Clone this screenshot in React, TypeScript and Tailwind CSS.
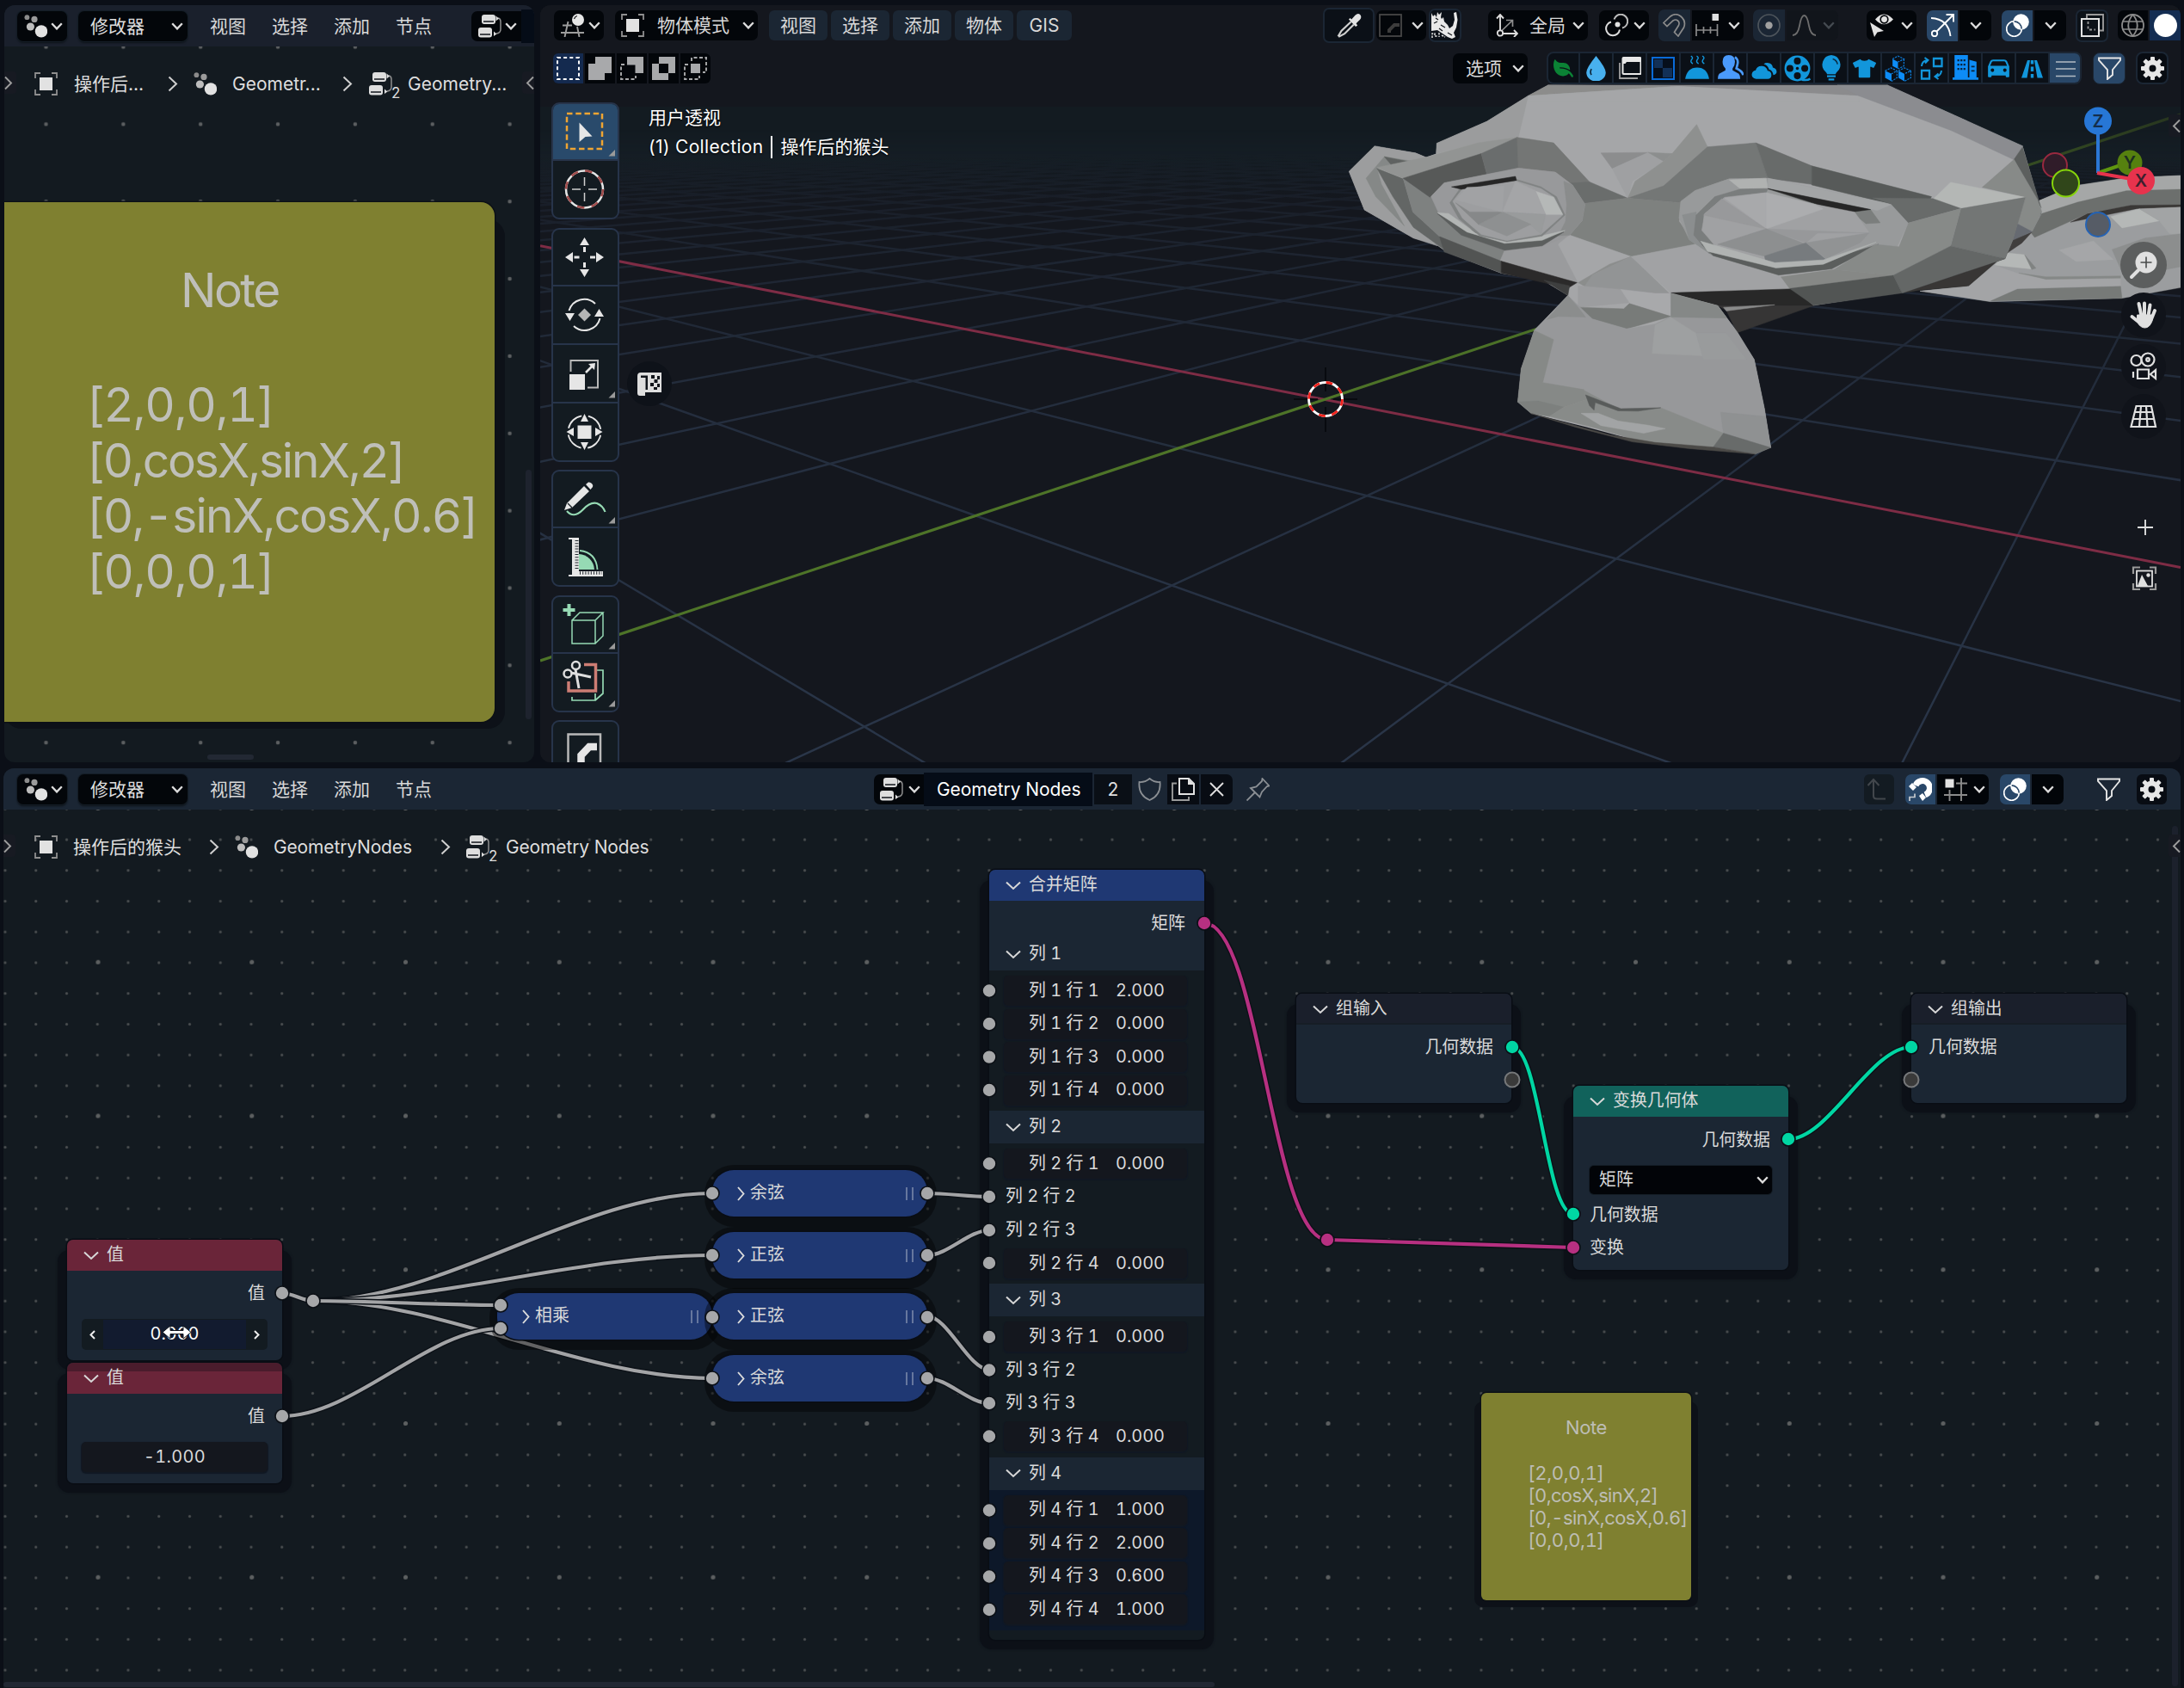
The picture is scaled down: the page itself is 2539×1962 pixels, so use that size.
import React from "react";
import { FaLeaf, FaTshirt } from "react-icons/fa";
import { IoCar } from "react-icons/io5";

type Kids = { children?: React.ReactNode };

/* ---------- icons ---------- */

function Ico({ children, size = 27, className = "" }: Kids & { size?: number; className?: string }) {
  return (
    <svg width={size} height={size} viewBox="0 0 27 27" fill="none" className={`shrink-0 ${className}`}>
      {children}
    </svg>
  );
}

const Chev = ({ c = "#dcdcdc", className = "" }: { c?: string; className?: string }) => (
  <svg width="14" height="9" viewBox="0 0 14 9" fill="none" className={`shrink-0 ${className}`}>
    <path d="M1.2 1.2 L7 7.4 L12.8 1.2" stroke={c} strokeWidth="2.3" />
  </svg>
);

const BigChev = () => (
  <svg width="18" height="11" viewBox="0 0 18 11" fill="none" className="shrink-0">
    <path d="M1 1.5 L9 9 L17 1.5" stroke="#d8d8d8" strokeWidth="2" />
  </svg>
);

const CrumbChev = ({ className = "" }: { className?: string }) => (
  <svg width="12" height="19" viewBox="0 0 12 19" fill="none" className={`shrink-0 ${className}`}>
    <path d="M1.5 1.5 L10 9.5 L1.5 17.5" stroke="#cfcfcf" strokeWidth="2" />
  </svg>
);

const ModIcon = () => (
  <Ico>
    <circle cx="3.4" cy="3.2" r="2.9" fill="#8b8b8b" />
    <circle cx="12" cy="5.4" r="3.6" fill="#9b9b9b" />
    <circle cx="7.4" cy="14" r="4.6" fill="#bdbdbd" />
    <circle cx="20" cy="19.4" r="7.2" fill="#e2e2e2" />
  </Ico>
);

const TreeIcon = () => (
  <Ico>
    <rect x="4" y="0" width="16" height="11" rx="3" fill="#dedede" />
    <path d="M6 8 H18" stroke="#10151b" strokeWidth="1.3" />
    <rect x="0" y="15" width="16" height="11.5" rx="3" fill="#dedede" />
    <path d="M2 23 H14" stroke="#10151b" strokeWidth="1.3" />
    <path d="M23 4 Q26 4.500 26 8 V17 Q26 21.500 21 22" stroke="#8f8f8f" strokeWidth="1.500" />
    <path d="M20.500 1.500 L24 4.500 L20.500 7.500 Z M18 19.500 L21.500 22.500 L18 25 Z" fill="#dedede" />
  </Ico>
);

const ObjIcon = () => (
  <Ico>
    <path d="M1 7 V1 H7 M20 1 H26 V7 M26 20 V26 H20 M7 26 H1 V20" stroke="#8f8f8f" strokeWidth="1.8" />
    <rect x="6" y="6" width="15" height="15" fill="#e2e2e2" />
  </Ico>
);

const ViewIcon = () => (
  <Ico>
    <circle cx="20" cy="7" r="7" fill="#e6e6e6" />
    <path d="M15.500 6 Q16.500 3 19 2.500" stroke="#111" strokeWidth="1.200" />
    <path d="M2 13.500 H13 M0 22 H27 M8.500 9 L4.500 27 M19 15 L21.500 27" stroke="#9d9d9d" strokeWidth="1.900" />
  </Ico>
);

const OverlayIcon = () => (
  <Ico>
    <circle cx="17.500" cy="9.500" r="9.300" fill="#fff" />
    <circle cx="9.500" cy="17.500" r="8.800" stroke="#fff" strokeWidth="1.700" />
    <path d="M9.700 8.800 A8.800 8.800 0 0 1 18.200 17.600" stroke="#294768" strokeWidth="1.700" />
  </Ico>
);

const FunnelIcon = () => (
  <Ico>
    <path d="M1 1.500 H26 V4 L17 15 V21 L11 26 V15 L1 4 Z" stroke="#e6e6e6" strokeWidth="1.900" />
  </Ico>
);

const GearIcon = () => (
  <Ico>
    <circle cx="13.500" cy="13.500" r="7" stroke="#e6e6e6" strokeWidth="6" />
    {[0, 45, 90, 135, 180, 225, 270, 315].map((a) => (
      <rect key={a} x="11" y="0" width="5" height="6" rx="1" fill="#e6e6e6" transform={`rotate(${a} 13.5 13.5)`} />
    ))}
  </Ico>
);

const Eyedropper = () => (
  <Ico size={29}>
    <path d="M16 7 L20 2.500 Q23 -0.500 25.500 2 Q27.500 4.500 25 7.500 L21 11.500 L22.500 13.500 L20.500 15 L13 7 L14.500 5.500 Z" fill="#e3e3e3" />
    <path d="M15.500 9.500 L5 19.500 L1.500 25.500 M18.500 12.500 L8.500 22.500 L2 26" stroke="#d0d0d0" strokeWidth="2" />
  </Ico>
);

const BevelDim = () => (
  <Ico>
    <rect x="1" y="1" width="25" height="25" stroke="#464646" strokeWidth="1.800" />
    <path d="M12 22 V19 L18 13 H24" stroke="#3c3c3c" strokeWidth="4" />
  </Ico>
);

const Rhino = () => (
  <svg width="32" height="31" viewBox="0 0 32 31" className="shrink-0">
    <path
      d="M1 1 L3 5 L5 3 L7 6 L8 0 L10 3 L13 0 L12 6 L13 8 L15 6 L16 11 L20 15 L22 19 L26 16 L28 9 L27 1 L30 0 L31.500 9 L30 18 L27 24 L29 29 L25 31 L20 29 L14 25 L8 21 L1 22 Z"
      fill="#e8e8e8"
    />
    <path d="M4 13 L8 11 M12 15 L17 18 M10 19 L14 22 M20 24 L25 27 M6 7 L9 9" stroke="#15181d" strokeWidth="1.300" />
    <path d="M2 30 V25 H5 V28 H8 M10 24 V29 M13 27 L17 29" stroke="#e0e0e0" strokeWidth="1.500" fill="none" strokeDasharray="2.500 1.200" />
  </svg>
);

const OrientIcon = () => (
  <Ico>
    <path d="M6 20 V2 M2 5.500 L6 1 L10 5.500 M8 23 H25 M22 19 L26 23 L22 27" stroke="#dcdcdc" strokeWidth="1.900" />
    <path d="M7.500 20 L20 8 M13 7.500 H20.500 V15" stroke="#8f8f8f" strokeWidth="1.700" />
    <circle cx="6" cy="22.500" r="3.200" stroke="#dcdcdc" strokeWidth="1.800" />
  </Ico>
);

const PivotIcon = () => (
  <Ico>
    <circle cx="14.500" cy="12.500" r="3" fill="#e2e2e2" />
    <path d="M10.500 6.500 A8 8 0 1 1 20 16.500" stroke="#bcbcbc" strokeWidth="2" />
    <path d="M17 18.500 A8 8 0 1 1 7 9.500" stroke="#dcdcdc" strokeWidth="2" />
  </Ico>
);

const MagnetDim = () => (
  <Ico>
    <path
      d="M1 10.500 L9 3 Q15 -1.500 21 3 Q27.500 8.500 24.500 16 L18 26 L13.500 21.500 L18.500 13.500 Q20 10 17.500 8 Q15 6 12 8 L5 14.500 Z"
      stroke="#8b8b8b"
      strokeWidth="1.700"
    />
  </Ico>
);

const IncIcon = () => (
  <Ico>
    <rect x="19.500" y="0" width="8" height="8" fill="#dedede" />
    <path d="M1 12 V26 M9.500 15 V23 M17.500 15 V23 M25.500 12 V26 M1 19 H26" stroke="#8b8b8b" strokeWidth="1.700" />
  </Ico>
);

const PropIcon = () => (
  <Ico>
    <circle cx="13.500" cy="13.500" r="12.500" stroke="#4d545b" strokeWidth="1.700" />
    <circle cx="13.500" cy="13.500" r="4.200" fill="#a0a0a0" />
  </Ico>
);

const FalloffIcon = () => (
  <Ico>
    <path d="M0 25 Q6 25 8 14 Q10 2 13.500 2 Q17 2 19 14 Q21 25 27 25" stroke="#6d6d6d" strokeWidth="1.800" />
  </Ico>
);

const EyeCursorIcon = () => (
  <Ico>
    <path d="M6 6.500 Q16 -5.500 27 6.500 Q16 18 6 6.500 Z" fill="#e2e2e2" />
    <circle cx="16.500" cy="6.500" r="4.300" stroke="#05080c" strokeWidth="1.700" />
    <path d="M0 10 L16 20 L8.500 21.500 L5 27 Z" fill="#e2e2e2" />
  </Ico>
);

const GizmoIcon = () => (
  <Ico>
    <path d="M0 5 Q20 6 22.500 26" stroke="#fff" strokeWidth="1.900" />
    <path d="M6 21 L25 2 M17.500 1 H26 V9.500" stroke="#fff" strokeWidth="1.900" />
    <circle cx="4" cy="23" r="3.200" stroke="#fff" strokeWidth="1.900" />
  </Ico>
);

const XrayIcon = () => (
  <Ico>
    <rect x="1" y="6" width="20" height="20" stroke="#e2e2e2" strokeWidth="2" />
    <path d="M7 5 V1 H26 V19.500 H22" stroke="#9a9a9a" strokeWidth="1.900" />
    <path d="M8.500 9 V18.500 H17" stroke="#9a9a9a" strokeWidth="1.800" strokeDasharray="3 2.500" />
  </Ico>
);

const WireIcon = () => (
  <Ico>
    <circle cx="13.500" cy="13.500" r="12.500" stroke="#8b8b8b" strokeWidth="1.800" />
    <path d="M13.500 1 Q3 13.500 13.500 26 M13.500 1 Q24 13.500 13.500 26 M2 9 H25 M2 18 H25" stroke="#8b8b8b" strokeWidth="1.700" />
  </Ico>
);

const B = "#1296db";

const stripIcons: React.ReactNode[] = [
  <FaLeaf key="leaf" size={23} color="#0b8235" className="-scale-x-100" />,
  <Ico key="drop" size={29}>
    <path d="M13.500 0 Q24 13 24 18 A10.500 9.500 0 0 1 3 18 Q3 13 13.500 0 Z" fill="#48b0ee" />
    <path d="M8.500 14 Q6.500 17.500 8.500 20.500" stroke="#0c2335" strokeWidth="1.500" />
  </Ico>,
  <Ico key="win">
    <rect x="5.500" y="1" width="21" height="19" rx="1" stroke="#e8e8e8" strokeWidth="2" />
    <path d="M5 1 H27 V6 H10 L8.500 8 H5 Z" fill="#e8e8e8" />
    <path d="M2 7 V25 H23" stroke="#a0a0a0" strokeWidth="1.800" />
  </Ico>,
  <Ico key="check">
    <rect x="1" y="1" width="25" height="25" stroke="#0a6bd8" strokeWidth="2" fill="#060f1c" />
    <path d="M3 3 H13 V13 H3 Z M13 13 H24 V24 H13 Z" fill="#123057" />
  </Ico>,
  <Ico key="steam" size={30}>
    <path d="M1 25 Q3 13 13.500 13 Q24 13 26 25 Z" fill={B} />
    <path d="M7 1 Q10 2.500 7.500 5 Q6 7.500 9 9 M13 1 Q16 2.500 13.500 5 Q12 7.500 15 9 M19 1 Q22 2.500 19.500 5 Q18 7.500 21 9" stroke={B} strokeWidth="1.300" />
  </Ico>,
  <Ico key="users" size={30}>
    <path d="M5 7 Q5 0 11.500 0 Q18 0 18 7 Q18 11 15.500 14 V16 L22 19.500 Q23.500 21 23.500 25 H0 Q0 21 1.500 19.500 L8 16 V14 Q5 11 5 7 Z" fill="#4a9afb" />
    <path d="M18 2 Q22 5 20.500 10 L19.500 14 Q26 17 26.500 21" stroke="#4a9afb" strokeWidth="2.400" />
  </Ico>,
  <Ico key="cloud" size={30}>
    <path d="M5 25 Q0 24 0.500 20 Q1 16.500 4.500 16 Q6 11 11.500 11.500 Q16 12 17 16.500 Q21 17 21 21 Q21 25 17 25 Z" fill={B} />
    <path d="M13 9.500 Q15 7.500 19 8.500 Q22 9.500 22.500 13 Q26.500 14 26.500 17.500 Q26.500 20 23 21 Q22.500 16 18.500 15 Q17 10.500 13 9.500 Z" fill={B} />
  </Ico>,
  <Ico key="reel" size={31}>
    <circle cx="13.500" cy="13.500" r="13" fill={B} />
    <g fill="#0b1017">
      <circle cx="13.500" cy="6" r="3.500" />
      <circle cx="13.500" cy="21" r="3.500" />
      <circle cx="6" cy="13.500" r="3.500" />
      <circle cx="21" cy="13.500" r="3.500" />
      <circle cx="13.500" cy="13.500" r="1.500" />
    </g>
    <path d="M18 25 Q24 26 26.500 24" stroke={B} strokeWidth="2.200" />
  </Ico>,
  <Ico key="bulb" size={30}>
    <path d="M13.500 0 A10 10 0 0 1 19.500 17.500 Q18 19 18 20 H9 Q9 19 7.500 17.500 A10 10 0 0 1 13.500 0 Z" fill={B} />
    <path d="M9 22.200 H18 M10.500 25.500 H16.500" stroke={B} strokeWidth="2" />
    <path d="M15 4 Q19 5 20 9.500" stroke="#0b2b42" strokeWidth="1.400" />
  </Ico>,
  <FaTshirt key="shirt" size={27} color={B} />,
  <Ico key="cubes" size={31}>
    <g fill="#0d8cf7">
      <path d="M8 4 L13.500 7 V14 L8 11 Z M0.500 16 L7 19 V26.500 L0.500 23 Z M14 16 L20 19 V26.500 L14 23 Z" />
    </g>
    <g stroke="#0d7fe0" strokeWidth="1" fill="none" strokeDasharray="2 1">
      <path d="M8 4 L13.500 1 L19.500 4 L13.500 7 M19.500 4 V11 L13.500 14 M0.500 16 L6.500 13 L12.500 16 L7 19 M12.500 16 V23 L7 26.500 M14 16 L20 13 L26.500 16 L20 19 M26.500 16 V23 L20 26.500" />
    </g>
  </Ico>,
  <Ico key="swap">
    <path d="M16 2 H25.500 V11 H16 Z M2 16 H11 V25.500 H2 Z" stroke={B} strokeWidth="2.300" />
    <path d="M2 11 Q2.500 5 8 4 M5.500 1 L9.500 3.800 L6 7.500 M25 16 Q24.500 22 19 23 M21.500 19.500 L17.500 23 L21.500 26" stroke={B} strokeWidth="2" />
  </Ico>,
  <Ico key="bld" size={30}>
    <path d="M2 0 H16 V24 H2 Z M17.500 5 L25 7 V24 H17.500 Z M0 23.500 H27 V25.800 H0 Z" fill="#0d8cf7" />
    <path d="M5 5.500 H13.500 M5 10 H13.500 M5 14.500 H13.500" stroke="#08243f" strokeWidth="2.200" strokeDasharray="2 1.200" />
    <path d="M19.500 12 H23 M19.500 16.500 H23" stroke="#08243f" strokeWidth="1.500" />
  </Ico>,
  <IoCar key="car" size={33} color={B} />,
  <Ico key="road">
    <path d="M8 4 H11 L7.500 24.500 H1 Z M16 4 H19 L26 24.500 H19.500 Z" fill={B} />
    <path d="M13.500 4 V8.500 M13.500 11.500 V17 M13.500 20 V24.500" stroke={B} strokeWidth="3.400" />
  </Ico>,
  <Ico key="list">
    <path d="M2 6 H25 M2 14 H25 M2 22.500 H25" stroke="#b4bcc4" strokeWidth="1.700" />
  </Ico>,
];

/* ---------- bars ---------- */

const Menu = ({ children, className = "" }: Kids & { className?: string }) => (
  <span className={`w-[72px] shrink-0 text-center text-[#d8d8d8] ${className}`}>{children}</span>
);

const dark = "flex h-[35px] shrink-0 items-center rounded-[7px] bg-[#03060a] shadow-[0_0_0_1px_#141d26,0_2px_2px_#0d1218]";

function EditorMenus() {
  return (
    <>
      <div className={`${dark} w-[58px] justify-between pr-[5px] pl-[8px]`}>
        <ModIcon />
        <Chev />
      </div>
      <div className={`${dark} ml-[13px] w-[127px] justify-between pr-[5px] pl-[14px] text-[#dedede]`}>
        修改器
        <Chev />
      </div>
      <div className="ml-[11px] flex">
        <Menu>视图</Menu>
        <Menu>选择</Menu>
        <Menu>添加</Menu>
        <Menu>节点</Menu>
      </div>
    </>
  );
}

const EdgeTab = ({ dir, className }: { dir: "l" | "r"; className: string }) => (
  <div className={`absolute flex h-[26px] w-[14px] items-center bg-[#171a22] ${dir === "l" ? "justify-end rounded-l" : "rounded-r"} ${className}`}>
    <svg width="10" height="17" viewBox="0 0 10 17" fill="none">
      <path d={dir === "l" ? "M9 1.500 L2 8.500 L9 15.500" : "M1 1.500 L8 8.500 L1 15.500"} stroke="#9d9d9d" strokeWidth="1.900" />
    </svg>
  </div>
);

const TreeWithCount = () => (
  <span className="relative flex w-[35px] shrink-0">
    <TreeIcon />
    <span className="absolute top-[13px] left-[26px] text-[17px] leading-[22px]">2</span>
  </span>
);

/* ---------- upper-left node editor ---------- */

function MiniNodeEditor() {
  return (
    <section className="relative ml-[5px] flex w-[616px] shrink-0 flex-col overflow-hidden rounded-[12px] bg-[#131a20]">
      <svg className="absolute inset-0" width="616" height="880" viewBox="5 6 616 880">
        <defs>
          <pattern id="dotsA" width="89.85" height="89.85" patternUnits="userSpaceOnUse" x="8.6" y="9.6">
            <circle cx="44.9" cy="44.9" r="2.300" fill="#5b5e60" />
          </pattern>
        </defs>
        <rect x="5" y="6" width="616" height="880" fill="url(#dotsA)" />
      </svg>
      <header className="relative flex h-[48px] shrink-0 items-center bg-[#1a202c] pl-[15px]">
        <EditorMenus />
        <div className="ml-[31px] flex h-[35px] w-[58px] shrink-0 items-center justify-between rounded-l-[7px] bg-[#03060a] pr-[5px] pl-[8px]">
          <TreeIcon />
          <Chev />
        </div>
        <div className="h-[39px] w-[20px] bg-[#050c17]" />
      </header>
      <nav className="relative mt-[24px] flex h-[38px] items-center pl-[35px] text-[#dedede]">
        <ObjIcon />
        <span className="ml-[19px] w-[90px]">操作后...</span>
        <CrumbChev className="mr-[18px] ml-[19px]" />
        <ModIcon />
        <span className="ml-[18px] w-[102px] whitespace-nowrap">Geometr...</span>
        <CrumbChev className="mr-[19px] ml-[26px]" />
        <TreeWithCount />
        <span className="ml-[10px] whitespace-nowrap">Geometry...</span>
      </nav>
      <EdgeTab dir="r" className="top-[77px] left-0" />
      <EdgeTab dir="l" className="top-[77px] right-0" />
      <div className="relative mt-[119px] h-[604px] w-[570px] shrink-0">
        <div className="absolute top-[20px] right-[-12px] bottom-[-8px] left-0 rounded-[20px] bg-[#0d1118]" />
        <div className="relative h-full rounded-r-[16px] bg-[#7f8030] pt-[65px] text-[55px] leading-[64.8px] text-[#bfbfb9] shadow-[0_0_0_1.5px_#0c1016]">
          <div className="pt-[5px] pl-[205px] tracking-[-0.046em]">Note</div>
          <div className="mt-[68px] pl-[95px] whitespace-pre tabular-nums">
            <div className="tracking-[-0.022em]">[2,0,0,1]</div>
            <div className="tracking-[-0.038em]">[0,cosX,sinX,2]</div>
            <div className="tracking-[-0.033em]">[0,-sinX,cosX,0.6]</div>
            <div className="tracking-[-0.022em]">[0,0,0,1]</div>
          </div>
        </div>
      </div>
      <div className="absolute top-[540px] right-[3px] h-[290px] w-[7px] rounded-full bg-[#1e232e]" />
      <div className="absolute bottom-[3px] left-[236px] h-[6px] w-[54px] rounded-full bg-[#222833]" />
    </section>
  );
}

/* ---------- 3D viewport ---------- */

const O = [1541, 464];
const VA = [-203, 123.6];
const VB = [2607, 108.5];

function rays(from: number[], to: number[], step: number) {
  const out: string[] = [];
  for (let i = -70; i <= 70; i++) {
    if (i === 0) continue;
    const t = i * step;
    const dx = O[0] - from[0] + t * (to[0] - from[0]);
    const dy = O[1] - from[1] + t * (to[1] - from[1]);
    if (dy <= 0) continue;
    const k = 900 / dy;
    out.push(`M${from[0]} ${from[1]}L${(from[0] + dx * k).toFixed(1)} ${(from[1] + dy * k).toFixed(1)}`);
  }
  return out.join("");
}

type Poly = [string, string];

const faceL: Poly[] = [
  ["452,277 1048,277 1285,475 1318,685 1305,770 1270,790 1255,835 1075,950 918,995 750,995 784,1080 814,1170 832,1330 843,1457 816,1478 742,1460 620,1440 520,1390 423,1346 399,1308 405,1200 428,1075 487,962 445,915 370,890 275,822 255,795 216,775 130,683 103,558 148,475 220,498 238,512 256,500 257,466 345,395 417,312", "#a5a6a8"],
  ["452,277 678,281 417,312", "#8c8c8b"],
  ["452,277 1048,277 998,312 690,281", "#8b8b8d"],
  ["417,312 678,281 998,312 998,330 417,330", "#a5a6a8"],
  ["1048,277 1285,475 1270,520 1160,425 998,312 960,277", "#8b8c90"],
  ["417,312 345,395 257,466 256,500 330,465 400,447 410,370", "#9b9c9d"],
  ["148,475 220,498 238,512 152,548 180,640 216,740 258,800 216,775 130,683 103,558", "#9c9d9e"],
  ["165,510 215,525 152,548 160,600 200,735 150,640 133,580", "#858887"],
  ["165,510 205,525 178,538", "#5f6261"],
  ["152,548 198,582 215,690 265,775 268,810 216,740 180,640", "#636665"],
  ["152,545 238,512 330,465 398,447 335,500 198,580", "#929493"],
  ["198,580 250,640 262,700 310,770 376,815 470,795 505,920 370,850 265,775 215,690", "#7e8180"],
  ["376,815 490,765 470,795 505,920 368,850", "#9a9b9d"],
  ["262,770 370,850 370,888 270,820", "#525453"],
  ["370,850 503,920 487,938 370,888", "#2b2a2a"],
  ["445,912 490,930 487,962", "#3e3f3f"],
  ["198,580 335,500 345,568 270,595 245,642", "#575958"],
  ["335,500 398,447 405,547 345,568", "#6a6d6d"],
  ["398,447 462,465 525,592 495,602 465,560 400,547", "#747675"],
  ["525,592 592,645 515,662 490,596", "#6a6d6c"],
  ["545,498 628,496 565,549", "#8c8d8e"],
  ["628,496 655,525 600,590 592,645 565,549", "#9fa0a2"],
  ["628,496 670,500 655,525", "#8c8e8e"],
  ["713,405 732,478 655,605 592,645 605,590 655,525 670,500", "#8e908f"],
  ["732,478 817,465 838,580 770,582 710,620 685,660 592,645 655,605", "#747776"],
  ["817,465 915,540 915,600 838,580", "#686b6a"],
  ["915,540 1125,640 1118,665 1055,665 915,602", "#575a59"],
  ["515,662 592,645 685,660 682,720 710,795 598,835 490,765 512,718", "#7e817f"],
  ["490,765 598,835 530,900 505,920 470,795", "#a5a6a8"],
  ["598,835 530,895 520,935 505,920 560,860", "#8b8d8c"],
  ["598,835 665,955 605,975 590,985 515,935 530,895", "#929495"],
  ["598,835 710,795 740,830 857,895 885,940 668,953", "#a1a2a4"],
  ["668,953 883,940 918,995 750,995", "#282828"],
  ["750,995 918,995 784,1083 765,1010", "#363535"],
  ["760,1000 850,992 765,1012", "#8a8b8b"],
  ["247,640 270,595 400,547 465,560 495,602 517,665 512,718 490,765 445,800 376,815 310,770 262,700", "#98999b"],
  ["480,590 495,602 517,665 512,718 490,765 470,768 483,720 485,665", "#8a8c8c"],
  ["258,695 300,765 376,815 442,800 480,755 440,778 376,792 300,735", "#5c5f5e"],
  ["258,692 310,755 376,792 442,782 482,750 440,768 378,785 325,758 278,695", "#b2b5b4"],
  ["280,660 302,603 395,583 440,608 467,640 482,700 442,768 380,787 332,767 296,712", "#808383"],
  ["285,655 305,608 395,588 440,614 463,642 478,700 440,763 380,783 335,763 302,710", "#9d9ea0"],
  ["283,608 395,574 397,587 300,616", "#262626"],
  ["430,622 462,642 478,698 448,698", "#b5b8b7"],
  ["372,690 448,698 430,620 395,590", "#a4a5a7"],
  ["372,690 448,698 440,762 420,730", "#999b9c"],
  ["372,690 422,730 380,768 330,730", "#8e9091"],
  ["372,690 330,730 290,660 315,690", "#868889"],
  ["372,690 375,605 310,610 290,650", "#a1a2a4"],
  ["682,710 685,655 710,620 770,582 838,580 1055,665 1085,722 1065,802 1020,800 940,878 857,895 740,830 700,780", "#989a9b"],
  ["770,585 835,580 838,612 790,615", "#b0b2b1"],
  ["838,580 1055,665 1030,685 838,612", "#a3a5a6"],
  ["838,615 1018,682 1035,725 1010,728 985,690 920,665", "#7b7e7d"],
  ["688,700 712,690 715,770 740,830 700,780", "#8b8e8f"],
  ["712,700 745,640 790,615 838,614 835,627 765,643 725,700 724,750 750,815 735,825 708,765", "#7a7d7d"],
  ["838,614 1018,682 985,690 925,665", "#262626"],
  ["722,750 727,695 762,642 835,627 920,665 990,690 1015,755 1000,790 940,845 835,862 755,820", "#a0a1a3"],
  ["835,745 762,645 835,627", "#a8a9ab"],
  ["835,745 835,627 920,665 935,680", "#acadaf"],
  ["835,745 725,700 757,647", "#98999b"],
  ["835,745 1013,758 925,758 905,790", "#97989a"],
  ["835,745 905,795 830,833 750,795", "#8d8f90"],
  ["905,790 940,845 835,862 832,833", "#777b7e"],
  ["905,790 1015,758 1000,790 940,842", "#919394"],
  ["722,795 850,864 940,848 1032,795 950,875 857,895 742,832", "#5b5e5d"],
  ["720,785 850,855 935,846 1028,788 935,860 852,872 732,818", "#b0b3b2"],
  ["505,930 580,942 595,985 505,1000", "#9c9d9f"],
  ["580,942 640,955 665,955 668,1030 595,985", "#a8a9ab"],
  ["505,1000 585,1005 595,988 668,1030 590,1070 530,1038", "#787b79"],
  ["487,962 530,1038 590,1070 640,1055 668,1030 668,955 750,995 784,1080 814,1170 832,1330 843,1457 760,1410 650,1327 580,1335 515,1270 443,1245 462,1105 428,1075", "#97989a"],
  ["487,962 505,1000 518,1032 470,1030 450,1040", "#8b8d8d"],
  ["668,955 750,995 766,1035 668,1032", "#858887"],
  ["428,1075 462,1105 443,1245 515,1268 520,1300 480,1325 399,1308 405,1200", "#868987"],
  ["640,1058 668,1033 712,1085 725,1158 635,1150", "#9ea0a1"],
  ["712,1085 765,1085 800,1170 725,1170", "#999b9c"],
  ["399,1308 423,1346 455,1355 480,1325 435,1305", "#7d807e"],
  ["515,1270 580,1335 650,1327 760,1410 742,1457 620,1440 540,1395 455,1355 480,1325 520,1300", "#888b89"],
  ["518,1285 580,1330 650,1327 610,1338 575,1337 535,1310 533,1335 525,1320", "#585b5a"],
  ["510,1345 545,1385 620,1410 658,1395 628,1384 575,1370 540,1345", "#a2a4a5"],
  ["755,1342 833,1355 843,1457 760,1410", "#8f9192"],
  ["760,1410 843,1457 816,1478 742,1455", "#686b6a"],
  ["423,1346 560,1415 640,1440 742,1455 816,1478 700,1460 600,1438 500,1390", "#4b4a47"],
];

const faceR: Poly[] = [
  ["1060,700 1200,645 1368,620 1554,612 1554,1003 1350,1040 890,1052 645,1015 815,997 950,880 965,850 1035,810 1070,740", "#9b9d9f"],
  ["1060,700 1175,650 1368,620 1554,612 1554,662 1365,665 1195,705 1070,745", "#a5a7a7"],
  ["1070,745 1195,705 1365,665 1554,660 1554,716 1380,718 1235,742 1045,828 1033,812", "#6c6f6d"],
  ["1230,745 1380,716 1554,714 1554,722 1400,728 1170,775", "#3a3836"],
  ["1310,755 1410,728 1480,770 1350,795", "#b5b8b7"],
  ["1410,728 1554,722 1554,818 1515,815 1480,770", "#a2a4a5"],
  ["1315,870 1430,830 1554,815 1554,930 1400,960 1350,950", "#8c8e8e"],
  ["1130,872 1250,840 1320,905 1190,912", "#a5a6a8"],
  ["950,882 1010,888 1035,938 905,925", "#b5b8b7"],
  ["1010,888 1050,935 1035,940", "#808382"],
  ["815,997 905,925 990,955 1085,972 1345,965 1345,1000 985,1008 890,1050 645,1015", "#a3a4a6"],
  ["990,952 1085,965 1345,962 1345,970 1085,974", "#858887"],
  ["985,1008 1345,998 1350,1040 890,1050", "#777a78"],
  ["950,880 942,902 583,1022 645,1012 815,997", "#383635"],
  ["970,835 1037,808 1000,848 950,882", "#403e3d"],
  ["973,556 1003,512 1068,725 1050,695", "#5c5f5e"],
  ["973,556 862,653 1013,688 985,780 1037,808 1070,738 1055,695", "#878a88"],
  ["985,780 1037,808 968,838", "#666a71"],
  ["752,635 1013,688 788,727 690,695", "#b4b7b5"],
  ["690,692 788,727 605,777 545,712 480,690", "#686b6a"],
  ["788,727 1013,688 970,835 942,902 752,858", "#737675"],
  ["605,777 788,727 752,858 552,960 345,940 490,852 572,860", "#878a88"],
  ["752,858 942,902 583,1022 552,960", "#646766"],
  ["160,965 345,940 552,960 190,1006", "#868886"],
  ["552,960 583,1022 275,1065 190,1006", "#525554"],
];

function Ball({ x, y, r, fill, stroke, label }: { x: number; y: number; r: number; fill: string; stroke?: string; label?: string }) {
  return (
    <g>
      <circle cx={x} cy={y} r={stroke ? r - 1 : r} fill={fill} stroke={stroke} strokeWidth={stroke ? 2 : 0} />
      {label && (
        <text x={x} y={y + 7} textAnchor="middle" fontSize="20" fontWeight="600" fill="#0f1a26" fillOpacity="0.8">
          {label}
        </text>
      )}
    </g>
  );
}

function Scene() {
  return (
    <svg className="absolute inset-0" width="1907" height="880" viewBox="628 6 1907 880">
      <defs>
        <linearGradient id="sky" x1="0" y1="124" x2="0" y2="235" gradientUnits="userSpaceOnUse">
          <stop offset="0" stopColor="#131b21" />
          <stop offset="0.5" stopColor="#131b21" />
          <stop offset="1" stopColor="#14171e" />
        </linearGradient>
        <linearGradient id="fade" x1="0" y1="150" x2="0" y2="886" gradientUnits="userSpaceOnUse">
          <stop offset="0" stopColor="#fff" stopOpacity="0" />
          <stop offset="0.07" stopColor="#fff" stopOpacity="0.150" />
          <stop offset="0.2" stopColor="#fff" stopOpacity="0.450" />
          <stop offset="0.45" stopColor="#fff" stopOpacity="0.750" />
          <stop offset="1" stopColor="#fff" />
        </linearGradient>
        <linearGradient id="gaxis" x1="1541" y1="0" x2="2535" y2="0" gradientUnits="userSpaceOnUse">
          <stop offset="0" stopColor="#4e7428" />
          <stop offset="0.6" stopColor="#456825" />
          <stop offset="1" stopColor="#27351f" />
        </linearGradient>
        <mask id="far" maskUnits="userSpaceOnUse" x="628" y="6" width="1907" height="880">
          <rect x="628" y="6" width="1907" height="880" fill="url(#fade)" />
        </mask>
      </defs>
      <rect x="628" y="6" width="1907" height="880" fill="#14171e" />
      <rect x="628" y="124" width="1907" height="111" fill="url(#sky)" />
      <g mask="url(#far)" fill="none" stroke="#2a3649" strokeWidth="2.500">
        <path d={rays(VB, VA, 0.1053)} />
        <path d={rays(VA, VB, 0.138)} />
      </g>
      <path d="M628 285.700 L2535 659.500" stroke="#7e2c45" strokeWidth="3" />
      <path d="M628 768 L1541 464 L2535 133" stroke="url(#gaxis)" strokeWidth="3.200" fill="none" />
      <g transform="translate(1500 0) scale(0.66263 0.35714)">
        {faceL.slice(0, 1).map(([p, c]) => (
          <polygon key={p} points={p} fill={c} />
        ))}
      </g>
      <g transform="translate(2017 0) scale(0.33333)">
        {faceR.slice(0, 15).map(([p, c]) => (
          <polygon key={p} points={p} fill={c} stroke={c} strokeWidth="1" />
        ))}
      </g>
      <g transform="translate(1500 0) scale(0.66263 0.35714)">
        {faceL.slice(1).map(([p, c]) => (
          <polygon key={p} points={p} fill={c} stroke={c} strokeWidth="1" />
        ))}
      </g>
      <g transform="translate(2017 0) scale(0.33333)">
        {faceR.slice(15).map(([p, c]) => (
          <polygon key={p} points={p} fill={c} stroke={c} strokeWidth="1" />
        ))}
      </g>
      <path d="M628 6 H2535 V98 H628 Z" fill="#14171e" />
      {/* 3D cursor */}
      <path d="M1541 427 V455 M1541 473 V502 M1504 464 H1532 M1550 464 H1578" stroke="#06080c" strokeWidth="1.600" />
      <circle cx="1541" cy="464" r="19.500" stroke="#fff" strokeWidth="2.800" fill="none" />
      <circle cx="1541" cy="464" r="19.500" stroke="#f2231d" strokeWidth="2.800" fill="none" strokeDasharray="7.660 7.660" />
      {/* orientation gizmo */}
      <path d="M2439 201 L2474 189" stroke="#5f960f" strokeWidth="4" />
      <Ball x={2389} y={192} r={15} fill="#301c29" stroke="#99293f" />
      <Ball x={2476} y={189} r={14.5} fill="#56810f" label="Y" />
      <Ball x={2439} y={261} r={15} fill="#565c66" stroke="#2563b4" />
      <path d="M2439 201 V141" stroke="#2b77d4" strokeWidth="4" />
      <path d="M2438 201 L2489 210" stroke="#e7334d" strokeWidth="4" />
      <Ball x={2439} y={140.5} r={16} fill="#2777d6" label="Z" />
      <Ball x={2401.5} y={213} r={16.5} fill="#30461a" stroke="#86d30b" />
      <Ball x={2489} y={210} r={16} fill="#e7334d" label="X" />
      {/* navigation buttons */}
      <circle cx="2492" cy="308" r="27" fill="#5c5e5e" />
      {[366, 426, 484].map((y) => (
        <circle key={y} cx="2492" cy={y} r="26" fill="#10131a" />
      ))}
      <circle cx="2495" cy="305" r="12.500" fill="#e0e0e0" />
      <path d="M2486 314 L2478 322" stroke="#e0e0e0" strokeWidth="4" strokeLinecap="round" />
      <path d="M2488.500 305 H2501.500 M2495 298.500 V311.500" stroke="#4a4c4c" strokeWidth="1.600" />
      <g stroke="#e0e0e0" strokeLinecap="round" fill="#e0e0e0">
        <path d="M2486.500 353 L2489.500 367 M2493 352.500 V366 M2499.500 354.500 L2497.500 367 M2505 361 L2501 371 M2478.500 368 L2486 374" strokeWidth="4" fill="none" />
        <path d="M2485 366 H2503 L2502 373 Q2499 381 2493.500 381 Q2488 381 2484.500 374 Z" strokeWidth="1" strokeLinejoin="round" />
      </g>
      <g stroke="#e0e0e0" strokeWidth="2.200" fill="none">
        <circle cx="2483.500" cy="419" r="6" />
        <circle cx="2497" cy="418" r="7.500" />
        <circle cx="2497" cy="418" r="1.800" />
        <path d="M2485 429.500 H2498 V440 H2485 Z M2480 432 V439 M2506 430 L2500 435 L2506 440 Z" />
      </g>
      <g stroke="#e0e0e0" strokeWidth="2.200" fill="none">
        <path d="M2483.500 472 H2501 L2506 496 H2477.500 Z M2489 472 L2487 496 M2495 472 L2496.500 496 M2482 479 H2502.500 M2480 487 H2504" />
      </g>
      <path d="M2485 613 H2503 M2494 604 V622" stroke="#dedede" strokeWidth="1.900" />
      <g fill="none">
        <path d="M2480 667 V659.500 H2488 M2499 659.500 H2506 V667 M2506 678 V685 H2499 M2488 685 H2480 V678" stroke="#9a9a9a" strokeWidth="2.200" />
        <rect x="2484" y="663.500" width="18" height="18" stroke="#e0e0e0" strokeWidth="1.800" />
        <path d="M2485 681 L2490 668 L2497 681 Z" fill="#e0e0e0" />
        <circle cx="2497.500" cy="668.500" r="2.200" fill="#e0e0e0" />
      </g>
      {/* tool settings tab */}
      <circle cx="755" cy="446" r="26" fill="#0e1219" />
      <path d="M741 437 Q741 433 745 433 H769 V456 H750 V460 H744 Q741 460 741 457 Z" fill="#dedede" />
      <path d="M745 436.500 H753 V453 H750.500 V439 H745 Z" fill="#10141a" />
      <path d="M757 436 h4 v4 h-4 z M764 437 h3 v4 h-3 z M760.500 441 h4 v4 h-4 z M756 445 h4 v4 h-4 z M764 446 h3 v4 h-3 z M760 450 h4 v3 h-4 z" fill="#10141a" />
    </svg>
  );
}

const hdr = "flex h-[35px] shrink-0 items-center rounded-[7px] bg-[#03060a]";

function ViewHeader() {
  return (
    <div className="relative text-[#d8d8d8]">
      <div className="flex h-[48px] items-center pb-[1px] pl-[16px]">
        <div className={`${hdr} w-[58px] justify-between pr-[4px] pl-[8px]`}>
          <ViewIcon />
          <Chev />
        </div>
        <div className={`${hdr} ml-[13px] w-[166px] justify-between pr-[4px] pl-[7px]`}>
          <ObjIcon />
          <span>物体模式</span>
          <Chev />
        </div>
        <div className="ml-[13px] flex gap-[4px]">
          {["视图", "选择", "添加", "物体"].map((m) => (
            <span key={m} className="flex h-[35px] w-[68px] items-center justify-center rounded-[6px] bg-[#1b2633]">
              {m}
            </span>
          ))}
          <span className="flex h-[35px] w-[64px] items-center justify-center rounded-[6px] bg-[#1b2633]">GIS</span>
        </div>
        <div className="ml-[292px] flex h-[41px] w-[60px] items-center justify-center rounded-[7px] border-2 border-[#1b2634] bg-[#0b1017]">
          <Eyedropper />
        </div>
        <div className={`${hdr} ml-[2px] w-[58px] justify-between pr-[3px] pl-[3px]`}>
          <BevelDim />
          <Chev />
        </div>
        <div className="ml-[3px] flex h-[39px] w-[38px] items-center justify-center overflow-hidden rounded-[7px] border-2 border-[#1b2634] bg-[#0b1017] pr-[2px]">
          <Rhino />
        </div>
        <div className={`${hdr} ml-[31px] w-[116px] justify-between pr-[4px] pl-[8px]`}>
          <OrientIcon />
          <span className="ml-[5px]">全局</span>
          <Chev />
        </div>
        <div className={`${hdr} ml-[13px] w-[58px] justify-between pr-[4px] pl-[7px]`}>
          <PivotIcon />
          <Chev />
        </div>
        <div className="ml-[11px] flex h-[37px] w-[37px] items-center justify-center rounded-l-[7px] bg-[#1b2634]">
          <MagnetDim />
        </div>
        <div className="ml-[2px] flex h-[35px] w-[60px] items-center justify-between rounded-r-[7px] bg-[#03060a] pr-[4px] pl-[4px]">
          <IncIcon />
          <Chev />
        </div>
        <div className="ml-[11px] flex h-[37px] w-[37px] items-center justify-center rounded-l-[7px] bg-[#1b2634]">
          <PropIcon />
        </div>
        <div className="ml-[2px] flex h-[35px] w-[60px] items-center justify-between rounded-r-[7px] bg-[#11151b] pr-[4px] pl-[7px]">
          <FalloffIcon />
          <Chev c="#444a50" />
        </div>
        <div className={`${hdr} ml-[33px] w-[58px] justify-between pr-[4px] pl-[4px]`}>
          <EyeCursorIcon />
          <Chev />
        </div>
        <div className="ml-[12px] flex h-[36px] w-[36px] items-center justify-center rounded-l-[7px] bg-[#294768]">
          <GizmoIcon />
        </div>
        <div className="ml-[2px] flex h-[35px] w-[37px] items-center justify-center rounded-r-[7px] bg-[#03060a]">
          <Chev />
        </div>
        <div className="ml-[12px] flex h-[36px] w-[36px] items-center justify-center rounded-l-[7px] bg-[#294768]">
          <OverlayIcon />
        </div>
        <div className="ml-[2px] flex h-[35px] w-[37px] items-center justify-center rounded-r-[7px] bg-[#03060a]">
          <Chev />
        </div>
        <div className="ml-[11px] flex h-[38px] w-[38px] items-center justify-center rounded-[7px] border-2 border-[#1b2634] bg-[#0d1218]">
          <XrayIcon />
        </div>
        <div className="ml-[11px] flex h-[35px] w-[35px] items-center justify-center rounded-l-[7px] bg-[#03060a]">
          <WireIcon />
        </div>
        <div className="ml-[2px] flex h-[35px] w-[36px] items-center justify-center bg-[#142d52]">
          <span className="size-[27px] rounded-full bg-white" />
        </div>
      </div>
      <div className="flex h-[50px] items-center pl-[15px]">
        <div className="flex gap-[2px] overflow-hidden rounded-[6px]">
          <div className="flex size-[35px] items-center justify-center bg-[#142a4f]">
            <Ico>
              <rect x="1" y="1" width="25" height="25" stroke="#fff" strokeWidth="2" strokeDasharray="4 3.140" />
            </Ico>
          </div>
          <div className="flex size-[35px] items-center justify-center bg-[#03060a]">
            <Ico>
              <path d="M8 0 H27 V19 H19 V27 H0 V8 H8 Z" fill="#a8a9ab" />
            </Ico>
          </div>
          <div className="flex size-[35px] items-center justify-center bg-[#03060a]">
            <Ico>
              <path d="M8 0 H27 V19 H17.500 V9.500 H8 Z" fill="#a8a9ab" />
              <path d="M5 9 H1 V26 H18 V22" stroke="#a8a9ab" strokeWidth="1.900" strokeDasharray="4 2.500" />
            </Ico>
          </div>
          <div className="flex size-[35px] items-center justify-center bg-[#03060a]">
            <Ico>
              <path fillRule="evenodd" d="M8 0 H27 V19 H19 V27 H0 V8 H8 Z M8 8 V19 H19 V8 Z" fill="#a8a9ab" />
            </Ico>
          </div>
          <div className="flex size-[35px] items-center justify-center bg-[#03060a]">
            <Ico>
              <rect x="8" y="8" width="11" height="11" fill="#a8a9ab" />
              <path d="M9 5 V1 H26 V18 H22 M5 9 H1 V26 H18 V22" stroke="#a8a9ab" strokeWidth="1.900" strokeDasharray="4 2.500" />
            </Ico>
          </div>
        </div>
        <div className={`${hdr} ml-[863px] w-[87px] justify-between pr-[4px] pl-[15px]`}>
          选项
          <Chev />
        </div>
        <div className="ml-[22px] flex h-[38px] w-[622px] overflow-hidden rounded-[8px] border-2 border-[#1b2634] bg-[#1b2634]">
          {stripIcons.map((ic, i) => (
            <div
              key={i}
              className={`mr-[2px] flex shrink-0 items-center justify-center last:mr-0 ${i === 0 ? "w-[35px]" : "w-[37px]"} ${i === 15 ? "bg-[#294768]" : "bg-[#0b1017]"}`}
            >
              {ic}
            </div>
          ))}
        </div>
        <div className="ml-[13px] flex h-[37px] w-[38px] items-center justify-center rounded-[8px] border border-[#1b2634] bg-[#294768]">
          <FunnelIcon />
        </div>
        <div className="ml-[12px] flex h-[38px] w-[38px] items-center justify-center rounded-[8px] border-2 border-[#1b2634] bg-[#080c12]">
          <GearIcon />
        </div>
      </div>
    </div>
  );
}

/* ---------- tool shelf ---------- */

const T = ({ children }: Kids) => (
  <svg width="75" height="66" viewBox="0 0 75 66" fill="none" className="shrink-0">
    {children}
  </svg>
);
const corner = <path d="M72 54 V61.500 H64.500 Z" fill="#9a9a9a" />;
const g = "#96dab4";

const tools: React.ReactNode[][] = [
  [
    <T key="sel">
      <rect x="16" y="12" width="41" height="41" stroke="#f0a532" strokeWidth="2.500" strokeDasharray="6.500 3.750" />
      <path d="M30.500 22.500 L45.500 38.500 L37.500 39 L30.500 45 Z" fill="#e6e6e6" />
      {corner}
    </T>,
    <T key="cur">
      <circle cx="36.500" cy="33" r="21.500" stroke="#e6e6e6" strokeWidth="2.500" />
      <circle cx="36.500" cy="33" r="21.500" stroke="#a14b4b" strokeWidth="2.500" strokeDasharray="8.440 8.440" />
      <path d="M36.500 19 V29 M36.500 37 V47 M22 33 H32 M41 33 H51" stroke="#d0d0d0" strokeWidth="1.500" />
    </T>,
  ],
  [
    <T key="mov">
      <path d="M36.500 10 L42 19 H31 Z M36.500 56 L42 47 H31 Z M14 33 L23 27 V39 Z M59 33 L50 27 V39 Z" fill="#e6e6e6" />
      <path d="M36.500 21 V27 M36.500 39 V45 M24.500 33 H30.500 M43 33 H49" stroke="#e6e6e6" strokeWidth="3" />
    </T>,
    <T key="rot">
      <path d="M18.500 28 A18.500 18.500 0 0 1 49 20 M54.500 37 A18.500 18.500 0 0 1 24 46" stroke="#e6e6e6" strokeWidth="2" />
      <path d="M14 31 H25 L19.500 40 Z M48 35 H59 L53.500 26 Z" fill="#e6e6e6" />
      <path d="M36.500 25.500 L44 33 L36.500 40.500 L29 33 Z" fill="#b5b5b5" />
    </T>,
    <T key="scl">
      <rect x="19" y="34" width="18" height="18" fill="#e6e6e6" />
      <path d="M20.500 31 V18 H52 V49.500 H40" stroke="#b9b9b9" strokeWidth="2" />
      <path d="M38 32 L46 24" stroke="#e6e6e6" strokeWidth="2.500" />
      <path d="M41 22 L49 21 L48 29 Z" fill="#e6e6e6" />
      {corner}
    </T>,
    <T key="trf">
      <rect x="28.500" y="25.500" width="16" height="15.500" fill="#e6e6e6" />
      <circle cx="36.500" cy="33" r="19" stroke="#e6e6e6" strokeWidth="1.800" strokeDasharray="22 7.850" strokeDashoffset="-3.900" />
      <path d="M36.500 12 L41 21 H32 Z M36.500 54 L41 45 H32 Z M15.500 33 L24 28 V38 Z M57.500 33 L49 28 V38 Z" fill="#e6e6e6" />
    </T>,
  ],
  [
    <T key="ann">
      <path d="M13 46 L16 38 L36 18 L42 24 L22 43 Z M38 16 L41 13.500 Q43 13 45 15 Q47 17 46 19 L43.500 22 Z" fill="#e6e6e6" />
      <path d="M17 38 L22 43" stroke="#141b21" strokeWidth="1.200" />
      <path d="M16 47 Q24 56 34 46 Q43 36 51 38 Q58 41 60.500 48" stroke={g} strokeWidth="2.200" />
      {corner}
    </T>,
    <T key="mea">
      <path d="M18 11 H30 V50 H58 V56 H18 V54 H22 V13 H18 Z" fill="#e6e6e6" />
      <path d="M27.500 14 V49" stroke="#20262c" strokeWidth="4" strokeDasharray="1 2.200" />
      <path d="M31 52 H57" stroke="#20262c" strokeWidth="3.500" strokeDasharray="1 2.200" />
      <path d="M30 30 A19 19 0 0 1 48 48 H30 Z" fill={g} />
      <path d="M31 26 Q50 28 51.500 48" stroke={g} strokeWidth="1.800" />
    </T>,
  ],
  [
    <T key="cube">
      <path d="M11.500 16 H25.500 M18.500 9 V23" stroke={g} strokeWidth="4" />
      <path d="M22 28 H49 V55 H22 Z M22 28 L31 19 H58 L49 28 M58 19 V46 L49 55" stroke={g} strokeWidth="1.500" />
      {corner}
    </T>,
    <T key="cut">
      <path d="M22 50 V54 H49 V46 M49 54 L58 46 V19 H51" stroke={g} strokeWidth="1.700" />
      <path d="M36 12.500 H49.500 V43 H18 V32" stroke="#cd7d74" strokeWidth="3.500" />
      <circle cx="26.500" cy="13.500" r="4.500" stroke="#dedede" strokeWidth="2.500" />
      <circle cx="17" cy="23" r="4.500" stroke="#dedede" strokeWidth="2.500" />
      <path d="M26 18 L30 40 M21 22 L44 27" stroke="#dedede" strokeWidth="3" />
      {corner}
    </T>,
  ],
  [
    <T key="bev">
      <path d="M17.500 66 V14.500 H55 V66" stroke="#b9b9b9" strokeWidth="2.500" />
      <path d="M32.500 66 V39 L42 29 H51" stroke="#e6e6e6" strokeWidth="8.500" />
    </T>,
  ],
];

function ToolShelf() {
  return (
    <div className="flex h-[767px] w-[79px] flex-col gap-[9.500px] overflow-hidden">
      {tools.map((grp, gi) => (
        <div key={gi} className="flex shrink-0 flex-col overflow-hidden rounded-[9px] border-2 border-[#27344a] bg-[#131b21]">
          {grp.map((t, i) => (
            <div
              key={i}
              className={`flex h-[68px] items-center border-b-2 border-[#27344a] first:h-[66px] last:h-[66px] last:border-b-0 ${gi === 0 && i === 0 ? "bg-[#294a6b]" : ""}`}
            >
              {t}
            </div>
          ))}
        </div>
      ))}
    </div>
  );
}

function Viewport() {
  return (
    <section className="relative ml-[7px] flex w-[1907px] shrink-0 flex-col overflow-hidden rounded-[12px] bg-[#14171e]">
      <Scene />
      <ViewHeader />
      <div className="relative mt-[15px] flex pl-[13px]">
        <ToolShelf />
        <div className="ml-[34px] pt-[1px] leading-[34px] text-white [text-shadow:0_1px_2px_#000]">
          <div className="h-[34px]">用户透视</div>
          <div className="flex h-[34px] items-center">
            <span className="tracking-[0.015em]">(1) Collection</span>
            <span className="mr-[9px] ml-[9px] h-[26px] w-[2px] bg-white" />
            <span>操作后的猴头</span>
          </div>
        </div>
      </div>
      <EdgeTab dir="l" className="top-[127px] right-0" />
    </section>
  );
}

/* ---------- lower node editor ---------- */

const fieldCls = "flex h-[35px] items-center rounded-[5px] bg-[#14171e] shadow-[0_1px_1px_1px_#111823]";

function Node({
  x, y, h, head, headH = 36, title, body = "bg-[#1b2633]", children,
}: Kids & { x: number; y: number; h: number; head: string; headH?: number; title: string; body?: string }) {
  return (
    <div className="absolute w-[250px]" style={{ left: x, top: y, height: h }}>
      <div className="absolute top-[12px] right-[-11px] bottom-[-11px] left-[-11px] rounded-[14px] bg-[#0c1017] shadow-[0_0_3px_#0d1219]" />
      <div className={`relative flex h-full flex-col overflow-hidden rounded-[7px] shadow-[0_0_0_1.500px_#090d14] ${body}`}>
        <div className={`flex shrink-0 items-center gap-[9px] pl-[19px] ${head}`} style={{ height: headH }}>
          <BigChev />
          {title}
        </div>
        {children}
      </div>
    </div>
  );
}

type MRow = [string, string?];
const sections: { name: string; rows: MRow[]; tint: string }[] = [
  { name: "列 1", rows: [["列 1 行 1", "2.000"], ["列 1 行 2", "0.000"], ["列 1 行 3", "0.000"], ["列 1 行 4", "0.000"]], tint: "bg-[#131b21]" },
  { name: "列 2", rows: [["列 2 行 1", "0.000"], ["列 2 行 2"], ["列 2 行 3"], ["列 2 行 4", "0.000"]], tint: "bg-[#131b21]" },
  { name: "列 3", rows: [["列 3 行 1", "0.000"], ["列 3 行 2"], ["列 3 行 3"], ["列 3 行 4", "0.000"]], tint: "bg-[#131b21]" },
  { name: "列 4", rows: [["列 4 行 1", "1.000"], ["列 4 行 2", "2.000"], ["列 4 行 3", "0.600"], ["列 4 行 4", "1.000"]], tint: "bg-[#0d1829]" },
];

function Pill({ x, y, title }: { x: number; y: number; title: string }) {
  return (
    <div className="absolute h-[54px] w-[250px]" style={{ left: x, top: y }}>
      <div className="absolute -top-[6px] right-[-11px] bottom-[-12px] left-[-9px] rounded-[34px] bg-black/40" />
      <div className="relative flex h-full items-center rounded-[25px] bg-[#1f3873] pl-[29px] shadow-[0_0_0_1.500px_#090d14]">
        <svg width="9" height="17" viewBox="0 0 9 17" fill="none">
          <path d="M1 1 L7.500 8.500 L1 16" stroke="#dcdcdc" strokeWidth="1.900" />
        </svg>
        <span className="ml-[6px]">{title}</span>
        <span className="mr-[16px] ml-auto h-[15px] w-[9px] border-x-2 border-[#66779e]" />
      </div>
    </div>
  );
}

function link(x1: number, y1: number, x2: number, y2: number) {
  const flat = Math.abs(y2 - y1) < Math.abs(x2 - x1);
  const d = Math.abs(x2 - x1) * (flat ? 0.33 : 0.45);
  return `M${x1} ${y1} C${x1 + d} ${y1} ${x2 - d} ${y2} ${x2} ${y2}`;
}

const lowLink: [string, string][] = [[link(364, 1512, 828, 1602), "#a3a4a6"]];

const links: [string, string][] = [
  [link(328, 1503, 364, 1512), "#a3a4a6"],
  [link(364, 1512, 828, 1387), "#a3a4a6"],
  [link(364, 1512, 828, 1459), "#a3a4a6"],
  [link(364, 1512, 582, 1517), "#a3a4a6"],
  [link(328, 1646, 582, 1544), "#a3a4a6"],
  [link(1078, 1387, 1150, 1391), "#a3a4a6"],
  [link(1078, 1459, 1150, 1430), "#a3a4a6"],
  [link(1078, 1530, 1150, 1592), "#a3a4a6"],
  [link(1078, 1602, 1150, 1631), "#a3a4a6"],
  [link(1400, 1073, 1543, 1441), "#b73081"],
  ["M1543 1441 L1829 1450", "#b73081"],
  [link(1758, 1217, 1829, 1411), "#00d6a3"],
  [link(2079, 1324, 2222, 1217), "#00d6a3"],
];

const Wires = ({ items }: { items: [string, string][] }) => (
  <>
    {items.map(([d, c]) => (
      <g key={d}>
        <path d={d} stroke="#0c1117" strokeWidth="7" />
        <path d={d} stroke={c} strokeWidth="4.200" />
      </g>
    ))}
  </>
);

const grey: [number, number][] = [
  [328, 1503], [364, 1512], [328, 1646], [582, 1517], [582, 1544],
  [828, 1387], [828, 1459], [828, 1531], [828, 1602],
  [1078, 1387], [1078, 1459], [1078, 1531], [1078, 1602],
  ...[1151.5, 1190, 1228.6, 1267, 1352.5, 1391, 1430, 1468, 1554, 1592.5, 1631, 1669.5, 1755.5, 1794, 1832.5, 1871].map(
    (y) => [1150, y] as [number, number]
  ),
];
const green: [number, number][] = [[1758, 1217], [1829, 1411], [2079, 1324], [2222, 1217]];
const pink: [number, number][] = [[1400, 1073], [1543, 1441], [1829, 1450]];

const stepper = (d: string) => (
  <span className="flex w-[25px] justify-center">
    <svg width="7" height="11" viewBox="0 0 7 11" fill="none">
      <path d={d} stroke="#eee" strokeWidth="2" />
    </svg>
  </span>
);

function Canvas() {
  return (
    <div className="absolute -top-[893px] -left-[4px] h-[1962px] w-[2539px] text-[19.900px] text-[#dadada] tabular-nums">
      <svg className="absolute inset-0" width="2539" height="1962" fill="none">
        <defs>
          <pattern id="dotsB" width="35.75" height="35.75" patternUnits="userSpaceOnUse" x="4.400" y="974.400">
            <circle cx="1.600" cy="1.600" r="1.600" fill="#4a4e50" />
          </pattern>
          <pattern id="dotsC" width="178.75" height="178.75" patternUnits="userSpaceOnUse" x="111.500" y="937">
            <circle cx="2.600" cy="2.600" r="2.500" fill="#5c5f60" />
          </pattern>
        </defs>
        <rect y="893" width="2539" height="1069" fill="url(#dotsB)" />
        <rect y="893" width="2539" height="1069" fill="url(#dotsC)" />
        <Wires items={lowLink} />
      </svg>

      <Node x={78} y={1441} h={140} head="bg-[#6a2539]" title="值">
        <div className="mt-[7px] h-[38px] pr-[20px] text-right leading-[38px]">值</div>
        <div className="mx-[17px] mt-[11px] flex h-[36px] items-center justify-between rounded-[5px] bg-[#131b21]">
          {stepper("M6 1 L1.500 5.500 L6 10")}
          <span className="flex h-[34px] flex-1 items-center justify-center bg-[#121b2f] text-white">0.000</span>
          {stepper("M1 1 L5.500 5.500 L1 10")}
        </div>
      </Node>
      <Node x={78} y={1584} h={140} head="bg-[linear-gradient(#4a1c2c_10px,#6a2539_10px)]" title="值">
        <div className="mt-[7px] h-[38px] pr-[20px] text-right leading-[38px]">值</div>
        <div className={`${fieldCls} mx-[17px] mt-[11px] justify-center tracking-[0.02em]`}>-1.000</div>
      </Node>
      <svg className="absolute" style={{ left: 188, top: 1540 }} width="35" height="17" viewBox="0 0 35 17">
        <path d="M1 8.500 L10 1 V6.500 H25 V1 L34 8.500 L25 16 V10.500 H10 V16 Z" fill="#fff" stroke="#10141c" strokeWidth="1" />
      </svg>

      <Pill x={828} y={1360} title="余弦" />
      <Pill x={828} y={1432} title="正弦" />
      <Pill x={578} y={1503} title="相乘" />
      <Pill x={828} y={1503} title="正弦" />
      <Pill x={828} y={1575} title="余弦" />

      <Node x={1150} y={1011} h={895} head="bg-[#1f3873]" title="合并矩阵" body="bg-[#131b21]">
        <div className="h-[43px] shrink-0 bg-[#1b2633] pt-[7px] pr-[22px] text-right leading-[38px]">矩阵</div>
        {sections.map((s) => (
          <div key={s.name} className="shrink-0">
            <div className="flex h-[38px] items-center gap-[9px] bg-[#1b2633] pl-[19px]">
              <BigChev />
              {s.name}
            </div>
            <div className={`flex h-[163.200px] flex-col gap-[3.600px] pt-[6px] ${s.tint}`}>
              {s.rows.map(([label, v]) =>
                v ? (
                  <div key={label} className={`${fieldCls} mr-[20px] ml-[17px] justify-between pr-[26px] pl-[29px]`}>
                    <span>{label}</span>
                    <span>{v}</span>
                  </div>
                ) : (
                  <div key={label} className="flex h-[35px] items-center pl-[19px]">
                    {label}
                  </div>
                )
              )}
            </div>
          </div>
        ))}
      </Node>

      <Node x={1507} y={1155} h={127} head="border-b-2 border-[#161d26] bg-[#1a1f2b] pt-[2px]" title="组输入">
        <div className="mt-[7px] h-[38px] pr-[21px] text-right leading-[38px]">几何数据</div>
      </Node>
      <Node x={2222} y={1155} h={127} head="border-b-2 border-[#161d26] bg-[#1a1f2b] pt-[2px]" title="组输出">
        <div className="mt-[7px] h-[38px] pl-[20px] leading-[38px]">几何数据</div>
      </Node>
      <Node x={1829} y={1262} h={214} head="bg-[#11625b]" title="变换几何体">
        <div className="mt-[8px] h-[38px] pr-[21px] text-right leading-[38px]">几何数据</div>
        <div className="mx-[19px] mt-[11px] flex h-[33px] items-center justify-between rounded-[5px] bg-[#020408] pr-[4px] pl-[11px] shadow-[0_0_0_1px_#141d26]">
          矩阵
          <Chev />
        </div>
        <div className="mt-[5px] h-[38px] pl-[19px] leading-[38px]">几何数据</div>
        <div className="h-[38px] pl-[19px] leading-[38px]">变换</div>
      </Node>

      <div className="absolute h-[241px] w-[244px]" style={{ left: 1722, top: 1619 }}>
        <div className="absolute top-[10px] right-[-8px] bottom-[-8px] left-[-8px] rounded-[10px] bg-[#0d1118]" />
        <div className="relative h-full rounded-[6px] bg-[#7f8030] text-[22px] leading-[25.900px] text-[#bdbdb4] shadow-[0_0_0_1.500px_#0c1016]">
          <div className="pt-[28px] text-center tracking-[-0.02em]">Note</div>
          <div className="mt-[27px] pl-[54px] whitespace-pre tabular-nums">
            <div className="tracking-[-0.016em]">[2,0,0,1]</div>
            <div className="tracking-[-0.028em]">[0,cosX,sinX,2]</div>
            <div className="tracking-[-0.024em]">[0,-sinX,cosX,0.6]</div>
            <div className="tracking-[-0.016em]">[0,0,0,1]</div>
          </div>
        </div>
      </div>

      <svg className="pointer-events-none absolute inset-0" width="2539" height="1962" fill="none">
        <Wires items={links} />
        {grey.map(([x, y]) => (
          <circle key={`${x}-${y}`} cx={x} cy={y} r="8" fill="#a6a7a9" stroke="#0b0f15" strokeWidth="1.600" />
        ))}
        {green.map(([x, y]) => (
          <circle key={`${x}-${y}`} cx={x} cy={y} r="8" fill="#00d6a3" stroke="#0b0f15" strokeWidth="1.600" />
        ))}
        {pink.map(([x, y]) => (
          <circle key={`${x}-${y}`} cx={x} cy={y} r="8" fill="#b73081" stroke="#0b0f15" strokeWidth="1.600" />
        ))}
        <circle cx="1758" cy="1255" r="8.500" fill="#3a3a3a" stroke="#76787a" strokeWidth="2" />
        <circle cx="2222" cy="1255" r="8.500" fill="#3a3a3a" stroke="#76787a" strokeWidth="2" />
      </svg>
    </div>
  );
}

function NodeEditor() {
  return (
    <section className="relative mt-[7px] ml-[4px] flex h-[1069px] w-[2531px] flex-col overflow-hidden rounded-t-[12px] bg-[#131a20]">
      <Canvas />
      <header className="relative flex h-[48px] shrink-0 items-center bg-[#1b2634] pl-[16px]">
        <EditorMenus />
        <div className="ml-[499px] flex h-[35px] w-[58px] shrink-0 items-center justify-between rounded-l-[7px] bg-[#03060a] pr-[4px] pl-[7px]">
          <TreeIcon />
          <Chev />
        </div>
        <div className="flex h-[39px] w-[196px] items-center bg-[#050c17] pl-[15px] tracking-[-0.004em] whitespace-nowrap text-white">Geometry Nodes</div>
        <div className="ml-[2px] flex h-[35px] w-[44px] items-center justify-center bg-[#0a0f16] text-[#dedede]">2</div>
        <div className="ml-[1px] flex h-[35px] w-[39px] items-center justify-center">
          <Ico>
            <path d="M13.500 1 Q19 5.500 25.500 5 Q27 20 13.500 26 Q0 20 1.500 5 Q8 5.500 13.500 1 Z" stroke="#8b8f94" strokeWidth="1.800" />
          </Ico>
        </div>
        <div className="ml-[1px] flex h-[35px] w-[37px] items-center justify-center bg-[#080c13]">
          <Ico>
            <path d="M9 1 H20 L26 7 V19 H9 Z" stroke="#e2e2e2" strokeWidth="2" />
            <path d="M19 1 V8 H26 Z" fill="#e2e2e2" />
            <path d="M6 6.500 H1 V26 H20 V22" stroke="#9a9a9a" strokeWidth="1.900" />
          </Ico>
        </div>
        <div className="ml-[2px] flex h-[35px] w-[37px] items-center justify-center rounded-r-[7px] bg-[#080c13]">
          <Ico>
            <path d="M6 6 L21 21 M21 6 L6 21" stroke="#dedede" strokeWidth="1.900" />
          </Ico>
        </div>
        <div className="ml-[16px]">
          <Ico>
            <path d="M0.500 26.500 L9.500 17.500 M5 12 L15.500 22.500 L18 16.500 L24 10 L26.500 9.500 L18.500 1 L18 4 L11.500 10.500 Z" stroke="#8b8f94" strokeWidth="1.800" />
          </Ico>
        </div>
        <div className="ml-[691px] flex h-[35px] w-[35px] items-center justify-center rounded-[6px] bg-[#131b22]">
          <Ico>
            <path d="M7 2 V21 Q7 24.500 11 24.500 H21 M0.500 9 L7 2 L13.500 9" stroke="#42474c" strokeWidth="2" />
          </Ico>
        </div>
        <div className="ml-[13px] flex h-[35px] w-[35px] items-center justify-center rounded-l-[7px] bg-[#294768]">
          <Ico>
            <path d="M8 9 A8.500 8.500 0 1 1 19 20" stroke="#fff" strokeWidth="7" />
            <path d="M4.500 7.500 L9.500 14 M21 24 L13.500 18" stroke="#294768" strokeWidth="1.500" />
            <path d="M0 10 L4 6 L9 11 L5 15 Z M12 21 L16 18 L20 23 L16 27 Z" fill="#fff" />
            <path d="M1 27 V22.500 H7 V18.500" stroke="#c8ccd0" strokeWidth="1.700" />
          </Ico>
        </div>
        <div className="ml-[2px] flex h-[35px] w-[60px] items-center justify-between rounded-r-[7px] bg-[#020509] pr-[4px] pl-[8px]">
          <Ico>
            <rect x="1.500" y="1.500" width="10" height="10" fill="#e2e2e2" />
            <path d="M20 0 V27 M0 20 H27 M6.500 14 V27 M14 6.500 H27" stroke="#8b8b8b" strokeWidth="1.900" />
          </Ico>
          <Chev />
        </div>
        <div className="ml-[13px] flex h-[35px] w-[35px] items-center justify-center rounded-l-[7px] bg-[#294768]">
          <OverlayIcon />
        </div>
        <div className="ml-[2px] flex h-[35px] w-[37px] items-center justify-center rounded-r-[7px] bg-[#020509]">
          <Chev />
        </div>
        <div className="ml-[39px]">
          <FunnelIcon />
        </div>
        <div className="ml-[19px] flex h-[35px] w-[35px] items-center justify-center rounded-[6px] bg-[#080c13]">
          <GearIcon />
        </div>
      </header>
      <nav className="relative mt-[24px] flex h-[38px] items-center pl-[36px] text-[#dedede]">
        <ObjIcon />
        <span className="ml-[18px] w-[126px] whitespace-nowrap">操作后的猴头</span>
        <CrumbChev className="mr-[18px] ml-[32px]" />
        <ModIcon />
        <span className="ml-[18px] w-[161px] tracking-[-0.007em] whitespace-nowrap">GeometryNodes</span>
        <CrumbChev className="mr-[18px] ml-[33px]" />
        <TreeWithCount />
        <span className="ml-[11px] tracking-[-0.007em] whitespace-nowrap">Geometry Nodes</span>
      </nav>
      <EdgeTab dir="r" className="top-[77px] left-0" />
      <div className="absolute top-[67px] right-[3px] h-[1000px] w-[7px] rounded-full bg-[#1c212c]" />
      <EdgeTab dir="l" className="top-[77px] right-0" />
      <div className="absolute bottom-[1px] left-0 h-[6px] w-[1408px] rounded-full bg-[#222833]" />
    </section>
  );
}

export default function App() {
  return (
    <main className="h-[1962px] w-[2539px] overflow-hidden bg-[#0b0f17] pt-[6px] font-['Inter','Noto_Sans_CJK_SC',sans-serif] text-[21px] leading-none">
      <div className="flex h-[880px]">
        <MiniNodeEditor />
        <Viewport />
      </div>
      <NodeEditor />
    </main>
  );
}
